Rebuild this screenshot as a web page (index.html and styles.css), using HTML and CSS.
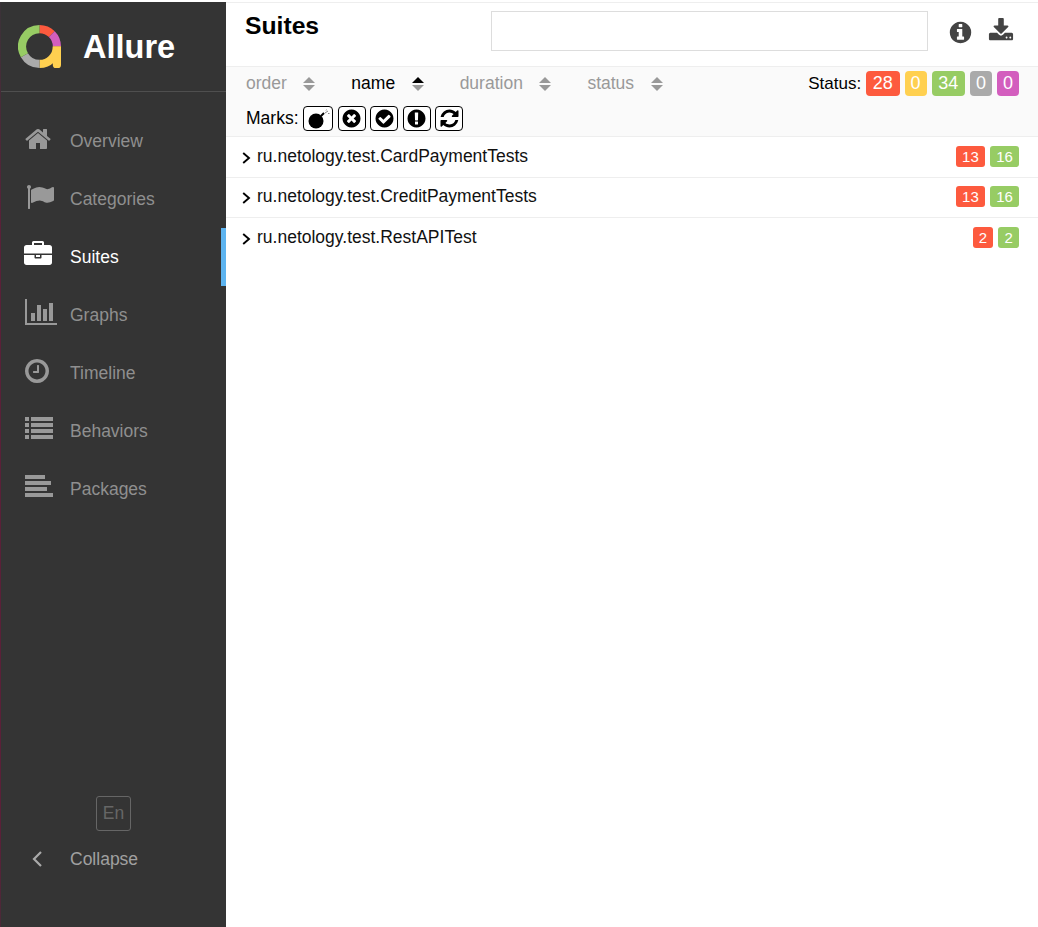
FILE: index.html
```html
<!DOCTYPE html>
<html lang="en">
<head>
<meta charset="utf-8">
<title>Allure</title>
<link rel="stylesheet" href="styles.css">
</head>
<body>
<div class="app">
  <aside class="side">
    <div class="brand">
      <svg class="logo" viewBox="0 0 42 42">
        <path class="seg seg-red" d="M21 4A17 17 0 0 1 33.02 8.98"/>
        <path class="seg seg-purple" d="M33.02 8.98A17 17 0 0 1 38 21"/>
        <path class="seg seg-yellow" d="M38 21A17 17 0 0 1 21 38"/>
        <path class="tail" d="M34 21h8v18a3 3 0 0 1-3 3h-2a3 3 0 0 1-3-3z"/>
        <path class="seg seg-gray" d="M21 38A17 17 0 0 1 6.280 29.500"/>
        <path class="seg seg-green" d="M6.280 29.500A17 17 0 0 1 21 4"/>
      </svg>
      <span class="brand-name">Allure</span>
    </div>
    <nav class="nav">
      <a class="nav-item"><span class="nav-icon"><svg class="ico ico-left" viewBox="0 0 1792 1792"><path d="M1472 992v480q0 26-19 45t-45 19h-384v-384h-256v384h-384q-26 0-45-19t-19-45v-480q0-1 .5-3t.5-3l575-474 575 474q1 2 1 6zm223-69l-62 74q-8 9-21 11h-3q-13 0-21-7l-692-577-692 577q-12 8-24 7-13-2-21-11l-62-74q-8-10-7-23.500t11-21.500l719-599q32-26 76-26t76 26l244 204v-195q0-14 9-23t23-9h192q14 0 23 9t9 23v408l219 182q10 8 11 21.500t-7 23.500z"/></svg></span>Overview</a>
      <a class="nav-item"><span class="nav-icon"><svg class="ico ico-right" viewBox="0 0 1792 1792"><path d="M320 256q0 72-64 110v1266q0 13-9.500 22.500t-22.500 9.500h-64q-13 0-22.500-9.500t-9.500-22.500v-1266q-64-38-64-110 0-53 37.500-90.500t90.500-37.500 90.500 37.500 37.500 90.500zm1472 64v763q0 25-12.500 38.500t-39.500 27.500q-215 116-369 116-61 0-123.500-22t-108.500-48-115.500-48-142.500-22q-192 0-464 146-17 9-33 9-26 0-45-19t-19-45v-742q0-32 31-55 21-14 79-43 236-120 421-120 107 0 200 29t219 88q38 19 88 19 54 0 117.500-21t110-47 88-47 54.500-21q26 0 45 19t19 45z"/></svg></span>Categories</a>
      <a class="nav-item nav-active"><span class="nav-icon"><svg class="ico ico-left" viewBox="0 0 1792 1792"><path d="M640 256h512v-128h-512v128zm1152 640v480q0 66-47 113t-113 47h-1472q-66 0-113-47t-47-113v-480h672v160q0 26 19 45t45 19h320q26 0 45-19t19-45v-160h672zm-768 0v128h-256v-128h256zm768-480v384h-1792v-384q0-66 47-113t113-47h352v-160q0-40 28-68t68-28h576q40 0 68 28t28 68v160h352q66 0 113 47t47 113z"/></svg></span>Suites</a>
      <a class="nav-item"><span class="nav-icon"><svg class="ico ico-wide" viewBox="0 0 2048 1792"><path d="M640 896v512h-256v-512h256zm384-512v1024h-256v-1024h256zm1024 1152v128h-2048v-1664h128v1536h1920zm-640-896v768h-256v-768h256zm384-384v1152h-256v-1152h256z"/></svg></span>Graphs</a>
      <a class="nav-item"><span class="nav-icon"><svg class="ico ico-clock" viewBox="0 0 1792 1792"><path d="M1024 544v448q0 14-9 23t-23 9h-320q-14 0-23-9t-9-23v-64q0-14 9-23t23-9h224v-352q0-14 9-23t23-9h64q14 0 23 9t9 23zm416 352q0-148-73-273t-198-198-273-73-273 73-198 198-73 273 73 273 198 198 273 73 273-73 198-198 73-273zm224 0q0 209-103 385.500t-279.500 279.500-385.500 103-385.500-103-279.500-279.500-103-385.500 103-385.500 279.500-279.500 385.500-103 385.500 103 279.500 279.500 103 385.500z"/></svg></span>Timeline</a>
      <a class="nav-item"><span class="nav-icon"><svg class="ico ico-list" viewBox="0 0 1792 1792"><path d="M0 192h256v256H0zM384 192h1408v256H384zM0 576h256v256H0zM384 576h1408v256H384zM0 960h256v256H0zM384 960h1408v256H384zM0 1344h256v256H0zM384 1344h1408v256H384z"/></svg></span>Behaviors</a>
      <a class="nav-item"><span class="nav-icon"><svg class="ico ico-list" viewBox="0 0 1792 1792"><path d="M0 192h1280v256H0zM0 576h1664v256H0zM0 960h1408v256H0zM0 1344h1792v256H0z"/></svg></span>Packages</a>
    </nav>
    <div class="side-foot">
      <div class="lang">En</div>
      <a class="nav-item collapse"><span class="nav-icon"><svg class="chev" viewBox="0 0 12 18"><path d="M10 2L3 9l7 7"/></svg></span>Collapse</a>
    </div>
  </aside>
  <main class="main">
    <header class="head">
      <h1 class="title">Suites</h1>
      <div class="search"></div>
      <svg class="tool tool-info" viewBox="0 0 1792 1792"><path d="M1152 1376v-160q0-14-9-23t-23-9h-96v-512q0-14-9-23t-23-9h-320q-14 0-23 9t-9 23v160q0 14 9 23t23 9h96v320h-96q-14 0-23 9t-9 23v160q0 14 9 23t23 9h448q14 0 23-9t9-23zm-128-896v-160q0-14-9-23t-23-9h-192q-14 0-23 9t-9 23v160q0 14 9 23t23 9h192q14 0 23-9t9-23zm640 416q0 209-103 385.500t-279.500 279.500-385.500 103-385.500-103-279.500-279.500-103-385.500 103-385.500 279.500-279.500 385.500-103 385.500 103 279.500 279.500 103 385.500z"/></svg>
      <svg class="tool tool-dl" viewBox="0 0 1792 1792"><path d="M1344 1344q0-26-19-45t-45-19-45 19-19 45 19 45 45 19 45-19 19-45zm256 0q0-26-19-45t-45-19-45 19-19 45 19 45 45 19 45-19 19-45zm128-224v320q0 40-28 68t-68 28h-1472q-40 0-68-28t-28-68v-320q0-40 28-68t68-28h465l135 136q58 56 136 56t136-56l136-136h464q40 0 68 28t28 68zm-325-569q17 41-14 70l-448 448q-18 19-45 19t-45-19l-448-448q-31-29-14-70 17-39 59-39h256v-448q0-26 19-45t45-19h256q26 0 45 19t19 45v448h256q42 0 59 39z"/></svg>
    </header>
    <section class="bar">
      <div class="bar-row">
        <div class="sort">order<span class="caret"><i class="up"></i><i class="down"></i></span></div>
        <div class="sort sort-on">name<span class="caret"><i class="up up-on"></i><i class="down"></i></span></div>
        <div class="sort">duration<span class="caret"><i class="up"></i><i class="down"></i></span></div>
        <div class="sort">status<span class="caret"><i class="up"></i><i class="down"></i></span></div>
        <div class="status"><span class="status-label">Status:</span>
          <span class="pill red">28</span><span class="pill pill-one yellow">0</span><span class="pill green">34</span><span class="pill pill-one gray">0</span><span class="pill pill-one purple">0</span>
        </div>
      </div>
      <div class="marks">Marks:
        <span class="mark mark-bomb"><svg viewBox="0 0 24 20"><circle cx="10" cy="12" r="7.500"/><path class="fuse" d="M15 7l3-3"/><path class="spark" d="M19 4l3-2M20 1.500l.5-1M22 4.500l1.500 0"/></svg></span>
        <span class="mark"><svg viewBox="0 0 1792 1792"><path d="M1277 1122q0-26-19-45l-181-181 181-181q19-19 19-45 0-27-19-46l-90-90q-19-19-46-19-26 0-45 19l-181 181-181-181q-19-19-45-19-27 0-46 19l-90 90q-19 19-19 46 0 26 19 45l181 181-181 181q-19 19-19 45 0 27 19 46l90 90q19 19 46 19 26 0 45-19l181-181 181 181q19 19 45 19 27 0 46-19l90-90q19-19 19-46zm387-226q0 209-103 385.500t-279.500 279.500-385.500 103-385.500-103-279.500-279.500-103-385.500 103-385.500 279.500-279.500 385.500-103 385.500 103 279.500 279.500 103 385.500z"/></svg></span>
        <span class="mark"><svg viewBox="0 0 1792 1792"><path d="M1412 734q0-28-18-46l-91-90q-19-19-45-19t-45 19l-408 407-226-226q-19-19-45-19t-45 19l-91 90q-18 18-18 46 0 27 18 45l362 362q19 19 45 19 27 0 46-19l543-543q18-18 18-45zm252 162q0 209-103 385.500t-279.500 279.500-385.500 103-385.500-103-279.500-279.500-103-385.500 103-385.500 279.500-279.500 385.500-103 385.500 103 279.500 279.500 103 385.500z"/></svg></span>
        <span class="mark"><svg viewBox="0 0 1792 1792"><path d="M896 128q209 0 385.500 103t279.500 279.500 103 385.500-103 385.500-279.500 279.500-385.500 103-385.500-103-279.500-279.500-103-385.500 103-385.500 279.500-279.500 385.500-103zm128 1247v-190q0-14-9-23.500t-22-9.500h-192q-13 0-23 10t-10 23v190q0 13 10 23t23 10h192q13 0 22-9.500t9-23.500zm-2-344l18-621q0-12-10-18-10-8-24-8h-220q-14 0-24 8-10 6-10 18l17 621q0 10 10 17.500t24 7.500h185q14 0 23.500-7.500t10.500-17.500z"/></svg></span>
        <span class="mark"><svg viewBox="0 0 1792 1792"><path d="M1639 1056q0 5-1 7-64 268-268 434.500t-478 166.500q-146 0-282.500-55t-243.500-157l-129 129q-19 19-45 19t-45-19-19-45v-448q0-26 19-45t45-19h448q26 0 45 19t19 45-19 45l-137 137q71 66 161 102t187 36q134 0 250-65t186-179q11-17 53-117 8-23 30-23h192q13 0 22.500 9.500t9.500 22.500zm25-800v448q0 26-19 45t-45 19h-448q-26 0-45-19t-19-45 19-45l138-138q-148-137-349-137-134 0-250 65t-186 179q-11 17-53 117-8 23-30 23h-199q-13 0-22.500-9.500t-9.500-22.500v-7q65-268 270-434.500t480-166.500q146 0 284 55.500t245 156.500l130-129q19-19 45-19t45 19 19 45z"/></svg></span>
      </div>
    </section>
    <div class="row">
      <svg class="row-chev" viewBox="0 0 9 12"><path d="M1.200 1L7 6l-5.800 5"/></svg>
      <span class="row-name">ru.netology.test.CardPaymentTests</span>
      <span class="tag red">13</span><span class="tag green">16</span>
    </div>
    <div class="row">
      <svg class="row-chev" viewBox="0 0 9 12"><path d="M1.200 1L7 6l-5.800 5"/></svg>
      <span class="row-name">ru.netology.test.CreditPaymentTests</span>
      <span class="tag red">13</span><span class="tag green">16</span>
    </div>
    <div class="row row-last">
      <svg class="row-chev" viewBox="0 0 9 12"><path d="M1.200 1L7 6l-5.800 5"/></svg>
      <span class="row-name">ru.netology.test.RestAPITest</span>
      <span class="tag red">2</span><span class="tag green">2</span>
    </div>
  </main>
</div>
</body>
</html>
```
FILE: styles.css
```css
* { box-sizing: border-box; }
html, body { margin: 0; height: 100%; }
body { background: #fff; font-family: "Liberation Sans", Arial, sans-serif; color: #000; overflow: hidden; }
.app { display: flex; height: 927px; padding-top: 2px; }

.side { width: 226px; flex: none; display: flex; flex-direction: column; background: #343434; color: #8f8f8f; border-left: 1px solid; border-image: linear-gradient(#3a3338, #5a2038 25%, #5a2038 90%, #4a2a38) 1; }
.brand { height: 90px; display: flex; align-items: center; border-bottom: 1px solid #4f4f4f; padding-left: 17px; flex: none; }
.logo { width: 43px; height: 43px; margin-right: 22px; }
.seg { fill: none; stroke-width: 8; }
.seg-red { stroke: #fd5a3e; }
.seg-purple { stroke: #d35ebe; }
.seg-yellow { stroke: #ffd050; }
.seg-gray { stroke: #aaa; }
.seg-green { stroke: #97cc64; }
.tail { fill: #ffd050; }
.brand-name { font-size: 32.5px; font-weight: 700; color: #fff; margin-top: 2px; }

.nav { padding-top: 20px; }
.nav-item { height: 58px; display: flex; align-items: center; padding-left: 24px; font-size: 17.500px; color: #8f8f8f; }
.nav-active { color: #fff; border-right: 5px solid #5db4f0; }
.nav-icon { width: 45px; flex: none; display: flex; align-items: center; }
.ico { width: 28px; height: 28px; margin-top: -4px; fill: #999; display: block; }
.nav-active .ico { fill: #fff; }
.ico-wide { width: 32px; }
.ico-left { margin-left: -1px; }
.ico-right { margin-left: 1px; }
.ico-clock { margin-left: -2px; }
.ico-list { margin-top: -6px; }

.side-foot { margin-top: auto; padding-bottom: 40px; }
.lang { width: 35px; height: 35px; margin: 0 0 0 95px; border: 1px solid #666; border-radius: 3px; color: #666; font-size: 17.500px; display: flex; align-items: center; justify-content: center; }
.collapse { height: 56px; color: #a0a0a0; }
.chev { width: 12px; height: 18px; margin-left: 6px; fill: none; stroke: #aaa; stroke-width: 2.200; }

.main { flex: 1; min-width: 0; border-top: 1px solid #eee; }
.head { height: 64px; display: flex; align-items: flex-start; padding-left: 19px; border-bottom: 1px solid #eee; }
.title { margin: 8px 0 0; width: 246px; flex: none; font-size: 24.700px; line-height: 30px; font-weight: 700; }
.search { width: 437px; height: 40px; margin-top: 8px; border: 1px solid #ddd; flex: none; }
.tool { fill: #444; flex: none; display: block; }
.tool-info { width: 25px; height: 25px; margin: 17px 0 0 20px; }
.tool-dl { width: 26px; height: 26px; margin: 15px 0 0 15px; }

.bar { height: 70px; background: #fafafa; border-bottom: 1px solid #eee; padding: 0 19px 0 20px; }
.bar-row { height: 33px; display: flex; align-items: center; font-size: 17.500px; }
.sort { display: flex; align-items: center; color: #999; margin-right: 36px; }
.sort-on { color: #000; }
.caret { width: 12px; margin-left: 16.500px; display: flex; flex-direction: column; gap: 2px; }
.caret i { display: block; width: 0; height: 0; border-left: 6px solid transparent; border-right: 6px solid transparent; }
.up { border-bottom: 6px solid #999; }
.down { border-top: 6px solid #999; }
.caret .up-on { border-bottom-color: #000; }
.status { margin-left: auto; display: flex; align-items: center; gap: 5px; }
.status-label { font-size: 17px; }
.pill { height: 25px; padding: 0 6.700px; border-radius: 4px; color: #fff; font-size: 18px; line-height: 25px; text-align: center; }
.pill-one { padding: 0 6px; }
.red { background: #fd5a3e; }
.yellow { background: #ffd050; }
.green { background: #97cc64; }
.gray { background: #aaa; }
.purple { background: #d35ebe; }
.marks { height: 32px; margin-top: 5px; display: flex; align-items: flex-start; gap: 4.500px; font-size: 17.500px; line-height: 27px; }
.mark { width: 28px; height: 25px; margin-top: 1px; border: 1px solid #000; border-radius: 4px; background: #fff; display: flex; align-items: center; justify-content: center; }
.mark svg { width: 21px; height: 21px; fill: #000; }
.mark-bomb { width: 30px; }
.mark-bomb svg { width: 24px; height: 20px; }
.fuse { stroke: #000; stroke-width: 2; fill: none; }
.spark { stroke: #888; stroke-width: 1; fill: none; }

.row { height: 40.500px; display: flex; align-items: center; border-bottom: 1px solid #eee; padding: 0 19px 0 16px; font-size: 17.500px; }
.row-last { border-bottom: 0; }
.row-chev { width: 9px; height: 12px; fill: none; stroke: #000; stroke-width: 1.900; flex: none; margin-right: 6px; margin-top: 2px; }
.row-name { margin-right: auto; margin-top: -1px; color: #111; }
.tag { height: 21px; margin-left: 5px; margin-top: -1px; padding: 0 6.200px; border-radius: 3px; color: #fff; font-size: 15px; line-height: 21px; text-align: center; }
```
